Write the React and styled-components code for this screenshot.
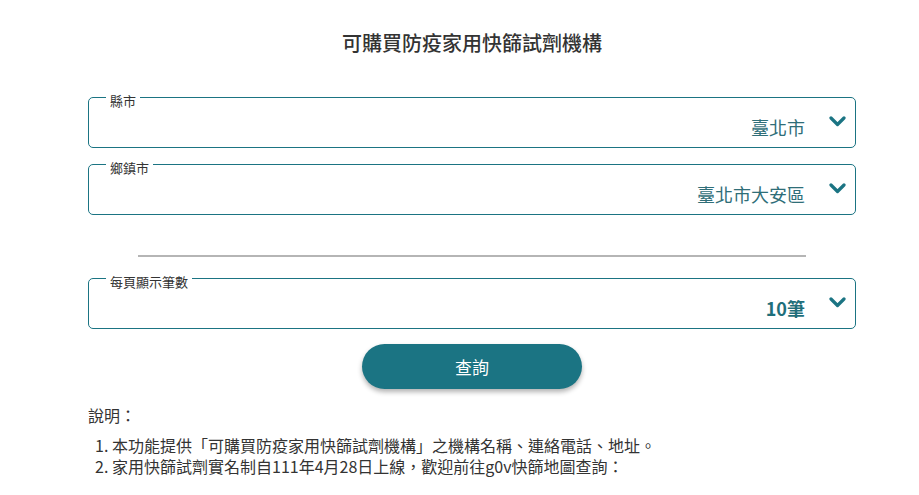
import React from "react";
import styled, { createGlobalStyle } from "styled-components";

const TEAL = "#1b7483";
const FONT = `"Noto Sans CJK TC", "Noto Sans", "Liberation Sans", sans-serif`;

const GlobalStyle = createGlobalStyle`
  body {
    margin: 0;
    background: #ffffff;
    font-family: ${FONT};
    color: #333333;
  }
`;

const Chevron = () => (
  <svg width="17" height="11" viewBox="0 0 17 11" fill="none">
    <polyline
      points="2,2 8.5,8.5 15,2"
      stroke={TEAL}
      strokeWidth="3.2"
      strokeLinecap="round"
      strokeLinejoin="round"
    />
  </svg>
);

const SelectField = ({ label, value, bold }) => (
  <Field>
    <Legend>{label}</Legend>
    <ValueRow>
      <Value $bold={bold}>{value}</Value>
      <IconWrap>
        <Chevron />
      </IconWrap>
    </ValueRow>
  </Field>
);

const App = () => (
  <>
    <GlobalStyle />
    <Page>
      <Title>可購買防疫家用快篩試劑機構</Title>
      <Fields>
        <SelectField label="縣市" value="臺北市" />
        <SelectField label="鄉鎮市" value="臺北市大安區" />
      </Fields>
      <Divider />
      <SelectField label="每頁顯示筆數" value="10筆" bold />
      <ButtonRow>
        <SearchButton>查詢</SearchButton>
      </ButtonRow>
      <Notes>
        <NotesTitle>說明：</NotesTitle>
        <NoteList>
          <li>本功能提供「可購買防疫家用快篩試劑機構」之機構名稱、連絡電話、地址。</li>
          <li>家用快篩試劑實名制自111年4月28日上線，歡迎前往g0v快篩地圖查詢：</li>
        </NoteList>
      </Notes>
    </Page>
  </>
);

const Page = styled.div`
  width: 768px;
  padding: 28px 0 0 88px;
  display: flex;
  flex-direction: column;
`;

const Title = styled.h1`
  margin: 0 0 29px;
  font-size: 20px;
  line-height: 30px;
  font-weight: 500;
  text-align: center;
  color: #333333;
`;

const Fields = styled.div`
  display: flex;
  flex-direction: column;
  gap: 6px;
`;

const Field = styled.fieldset`
  margin: 0;
  padding: 0;
  min-width: 0;
  border: 1px solid ${TEAL};
  border-radius: 5px;
`;

const Legend = styled.legend`
  margin-left: 17px;
  padding: 8px 4px 0;
  font-size: 13px;
  line-height: 12px;
  color: #333333;
`;

const ValueRow = styled.div`
  height: 40px;
  display: flex;
  align-items: center;
  justify-content: flex-end;
  gap: 24px;
  padding-right: 9px;
`;

const Value = styled.span`
  font-size: 18px;
  font-weight: ${(p) => (p.$bold ? 700 : 400)};
  color: ${(p) => (p.$bold ? "#1f6f7b" : "#2f6e78")};
`;

const IconWrap = styled.span`
  display: flex;
  margin-bottom: 12px;
`;

const Divider = styled.hr`
  margin: 40px 50px 11px;
  border: 0;
  height: 2px;
  background: #b5b5b5;
`;

const ButtonRow = styled.div`
  display: flex;
  justify-content: center;
  margin-top: 15px;
`;

const SearchButton = styled.button`
  width: 220px;
  height: 45px;
  border: 0;
  border-radius: 23px;
  background: ${TEAL};
  color: #ffffff;
  font-family: ${FONT};
  font-size: 17px;
  box-shadow: 0 3px 5px rgba(0, 0, 0, 0.3);
  cursor: pointer;
`;

const Notes = styled.div`
  margin-top: 16px;
  font-size: 16px;
  line-height: 21px;
  color: #333333;
`;

const NotesTitle = styled.p`
  margin: 0 0 9px;
`;

const NoteList = styled.ol`
  margin: 0;
  padding-left: 24px;
`;

export default App;
